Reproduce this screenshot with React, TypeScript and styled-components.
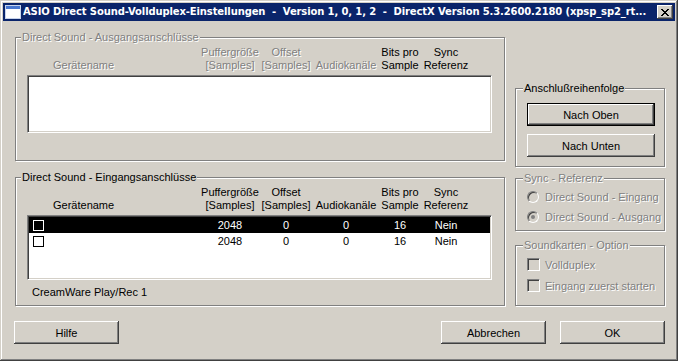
import React from "react";
import styled, { createGlobalStyle, css } from "styled-components";

const GlobalStyle = createGlobalStyle`
  body {
    margin: 0;
    font-family: "Liberation Sans", Arial, sans-serif;
    font-size: 11px;
    color: #000;
  }
`;

const FACE = "#d4d0c8";

// disabled text in the classic look: grey with a white "emboss"
const dimText = css`
  color: #808080;
  text-shadow: 1px 1px #fff;
`;

const Window = styled.div`
  width: 678px;
  height: 361px;
  box-sizing: border-box;
  padding: 3px;
  background: ${FACE};
  box-shadow: inset -1px -1px #404040, inset 1px 1px ${FACE},
    inset -2px -2px #808080, inset 2px 2px #fff;
  display: flex;
  flex-direction: column;
`;

const TitleBar = styled.div`
  height: 18px;
  flex: none;
  background: #0a246a;
  display: flex;
  align-items: center;
  padding: 0 2px;
`;

const TitleText = styled.div`
  margin-left: 2px;
  color: #fff;
  font-family: "DejaVu Sans", Verdana, sans-serif;
  font-weight: bold;
  font-size: 10px;
  letter-spacing: -0.12px;
  line-height: 18px;
  white-space: pre;
  overflow: hidden;
  min-width: 0;
  flex: 1;
`;

const CloseButton = styled.div`
  width: 16px;
  height: 14px;
  flex: none;
  background: ${FACE};
  box-shadow: inset -1px -1px #404040, inset 1px 1px #fff,
    inset -2px -2px #808080;
  display: flex;
  align-items: center;
  justify-content: center;
`;

const Client = styled.div`
  flex: 1;
  padding: 16px 10px 0 12px;
  display: flex;
  flex-direction: column;
`;

const Main = styled.div`
  display: grid;
  grid-template-columns: 490px 150px;
  column-gap: 10px;
`;

const LeftColumn = styled.div`
  display: flex;
  flex-direction: column;
  gap: 16px;
`;

const RightColumn = styled.div`
  display: flex;
  flex-direction: column;
  padding-top: 51px;
`;

const Group = styled.div<{ $h: number; $top?: number }>`
  box-sizing: border-box;
  height: ${(p) => p.$h}px;
  margin-top: ${(p) => p.$top ?? 0}px;
  border: 1px solid #808080;
  box-shadow: inset 1px 1px #fff, 1px 1px #fff;
  display: flex;
  flex-direction: column;
  align-items: flex-start;
`;

const Legend = styled.div<{ $dim?: boolean; $inset?: number }>`
  margin: -7px 0 0 ${(p) => p.$inset ?? 5}px;
  padding: 0 1px;
  line-height: 13px;
  background: ${FACE};
  white-space: nowrap;
  ${(p) => p.$dim && dimText}
`;

const HeadGrid = styled.div`
  display: grid;
  grid-template-columns: 173px 60px 52px 68px 40px 52px;
  margin: 2px 0 0 11px;
  line-height: 13px;
`;

const HeadCell = styled.div<{ $dim?: boolean; $name?: boolean }>`
  display: flex;
  flex-direction: column;
  justify-content: flex-end;
  align-items: ${(p) => (p.$name ? "flex-start" : "center")};
  padding-left: ${(p) => (p.$name ? 26 : 0)}px;
  height: 26px;
  white-space: nowrap;
  ${(p) => p.$dim && dimText}
`;

const ListBox = styled.div<{ $h: number }>`
  box-sizing: border-box;
  margin: 3px 0 0 11px;
  width: 465px;
  height: ${(p) => p.$h}px;
  background: #fff;
  border: 1px solid;
  border-color: #808080 #fff #fff #808080;
  box-shadow: inset 1px 1px #404040, inset -1px -1px ${FACE};
  padding: 1px;
`;

const Row = styled.div<{ $selected?: boolean }>`
  display: grid;
  grid-template-columns: 171px 60px 52px 68px 40px 52px;
  height: 16px;
  align-items: center;
  background: ${(p) => (p.$selected ? "#000" : "transparent")};
  color: ${(p) => (p.$selected ? "#fff" : "#000")};
`;

const Cell = styled.div`
  display: flex;
  justify-content: center;
`;

const NameCell = styled.div`
  display: flex;
  align-items: center;
  padding-left: 4px;
`;

const RowCheck = styled.div`
  width: 11px;
  height: 11px;
  box-sizing: border-box;
  border: 1px solid currentColor;
`;

const Caption = styled.div`
  margin: 6px 0 0 16px;
  line-height: 13px;
`;

const Button = styled.div<{ $w: number; $default?: boolean }>`
  box-sizing: border-box;
  width: ${(p) => p.$w}px;
  height: 23px;
  background: ${FACE};
  display: flex;
  align-items: center;
  justify-content: center;
  border: ${(p) => (p.$default ? "1px solid #000" : "none")};
  box-shadow: inset -1px -1px #404040, inset 1px 1px #fff,
    inset -2px -2px #808080;
`;

const ButtonStack = styled.div`
  display: flex;
  flex-direction: column;
  gap: 8px;
  margin: 8px 0 0 11px;
`;

const OptionList = styled.div`
  margin: 2px 0 0 11px;
  display: flex;
  flex-direction: column;
`;

const Option = styled.div<{ $h: number }>`
  height: ${(p) => p.$h}px;
  display: flex;
  align-items: center;
  white-space: nowrap;
  ${dimText}
`;

const Radio = styled.div<{ $checked?: boolean }>`
  width: 12px;
  height: 12px;
  box-sizing: border-box;
  margin-right: 6px;
  border-radius: 50%;
  border: 1px solid;
  border-color: #808080 #fff #fff #808080;
  box-shadow: inset 1px 1px #404040;
  background: ${FACE};
  display: flex;
  align-items: center;
  justify-content: center;
  text-shadow: none;

  &::after {
    content: "";
    display: ${(p) => (p.$checked ? "block" : "none")};
    width: 4px;
    height: 4px;
    border-radius: 50%;
    background: #808080;
  }
`;

const CheckBox = styled.div`
  width: 13px;
  height: 13px;
  box-sizing: border-box;
  margin-right: 5px;
  border: 1px solid;
  border-color: #808080 #fff #fff #808080;
  box-shadow: inset 1px 1px #404040, inset -1px -1px ${FACE};
  background: ${FACE};
`;

const BottomRow = styled.div`
  display: flex;
  margin-top: 15px;
  gap: 14px;
`;

const Spacer = styled.div`
  flex: 1;
`;

const WindowIcon = () => (
  <svg width="16" height="14" viewBox="0 0 16 14">
    <rect x="0.5" y="0.5" width="15" height="13" fill="#fff" stroke="#c8d4ec" />
    <rect x="1" y="1" width="14" height="3" fill="#4a78d0" />
  </svg>
);

const CLOSE_X = [
  "XX....XX",
  ".XX..XX.",
  "..XXXX..",
  "...XX...",
  "..XXXX..",
  ".XX..XX.",
  "XX....XX",
];

const CloseGlyph = () => (
  <svg width="8" height="7" viewBox="0 0 8 7" shapeRendering="crispEdges">
    {CLOSE_X.flatMap((line, y) =>
      line.split("").map((c, x) =>
        c === "X" ? <rect key={`${x}-${y}`} x={x} y={y} width="1" height="1" fill="#000" /> : null
      )
    )}
  </svg>
);

type Port = { buffer: number; offset: number; channels: number; bits: number; sync: string };

const inputs: Port[] = [
  { buffer: 2048, offset: 0, channels: 0, bits: 16, sync: "Nein" },
  { buffer: 2048, offset: 0, channels: 0, bits: 16, sync: "Nein" },
];

const Headers = ({ dim }: { dim?: boolean }) => (
  <HeadGrid>
    <HeadCell $dim={dim} $name>Gerätename</HeadCell>
    <HeadCell $dim={dim}>
      <span>Puffergröße</span>
      <span>[Samples]</span>
    </HeadCell>
    <HeadCell $dim={dim}>
      <span>Offset</span>
      <span>[Samples]</span>
    </HeadCell>
    <HeadCell $dim={dim}>Audiokanäle</HeadCell>
    <HeadCell>
      <span>Bits pro</span>
      <span>Sample</span>
    </HeadCell>
    <HeadCell>
      <span>Sync</span>
      <span>Referenz</span>
    </HeadCell>
  </HeadGrid>
);

const App = () => {
  return (
    <>
      <GlobalStyle />
      <Window>
        <TitleBar>
          <WindowIcon />
          <TitleText>
            {"ASIO Direct Sound-Vollduplex-Einstellungen  -  Version 1, 0, 1, 2  -  DirectX Version 5.3.2600.2180 (xpsp_sp2_rt..."}
          </TitleText>
          <CloseButton>
            <CloseGlyph />
          </CloseButton>
        </TitleBar>

        <Client>
          <Main>
            <LeftColumn>
              <Group $h={124}>
                <Legend $dim>Direct Sound - Ausgangsanschlüsse</Legend>
                <Headers dim />
                <ListBox $h={58} />
              </Group>

              <Group $h={129}>
                <Legend>Direct Sound - Eingangsanschlüsse</Legend>
                <Headers />
                <ListBox $h={65}>
                  {inputs.map((p, i) => (
                    <Row key={i} $selected={i === 0}>
                      <NameCell>
                        <RowCheck />
                      </NameCell>
                      <Cell>{p.buffer}</Cell>
                      <Cell>{p.offset}</Cell>
                      <Cell>{p.channels}</Cell>
                      <Cell>{p.bits}</Cell>
                      <Cell>{p.sync}</Cell>
                    </Row>
                  ))}
                </ListBox>
                <Caption>CreamWare Play/Rec 1</Caption>
              </Group>
            </LeftColumn>

            <RightColumn>
              <Group $h={79}>
                <Legend $inset={7}>Anschlußreihenfolge</Legend>
                <ButtonStack>
                  <Button $w={128} $default>Nach Oben</Button>
                  <Button $w={128}>Nach Unten</Button>
                </ButtonStack>
              </Group>

              <Group $h={53} $top={11}>
                <Legend $dim $inset={7}>Sync - Referenz</Legend>
                <OptionList>
                  <Option $h={20}>
                    <Radio />
                    Direct Sound - Eingang
                  </Option>
                  <Option $h={20}>
                    <Radio $checked />
                    Direct Sound - Ausgang
                  </Option>
                </OptionList>
              </Group>

              <Group $h={61} $top={14}>
                <Legend $dim $inset={7}>Soundkarten - Option</Legend>
                <OptionList>
                  <Option $h={21}>
                    <CheckBox />
                    Vollduplex
                  </Option>
                  <Option $h={21}>
                    <CheckBox />
                    Eingang zuerst starten
                  </Option>
                </OptionList>
              </Group>
            </RightColumn>
          </Main>

          <BottomRow>
            <Button $w={105} style={{ marginLeft: -1 }}>Hilfe</Button>
            <Spacer />
            <Button $w={105}>Abbrechen</Button>
            <Button $w={105}>OK</Button>
          </BottomRow>
        </Client>
      </Window>
    </>
  );
};

export default App;
